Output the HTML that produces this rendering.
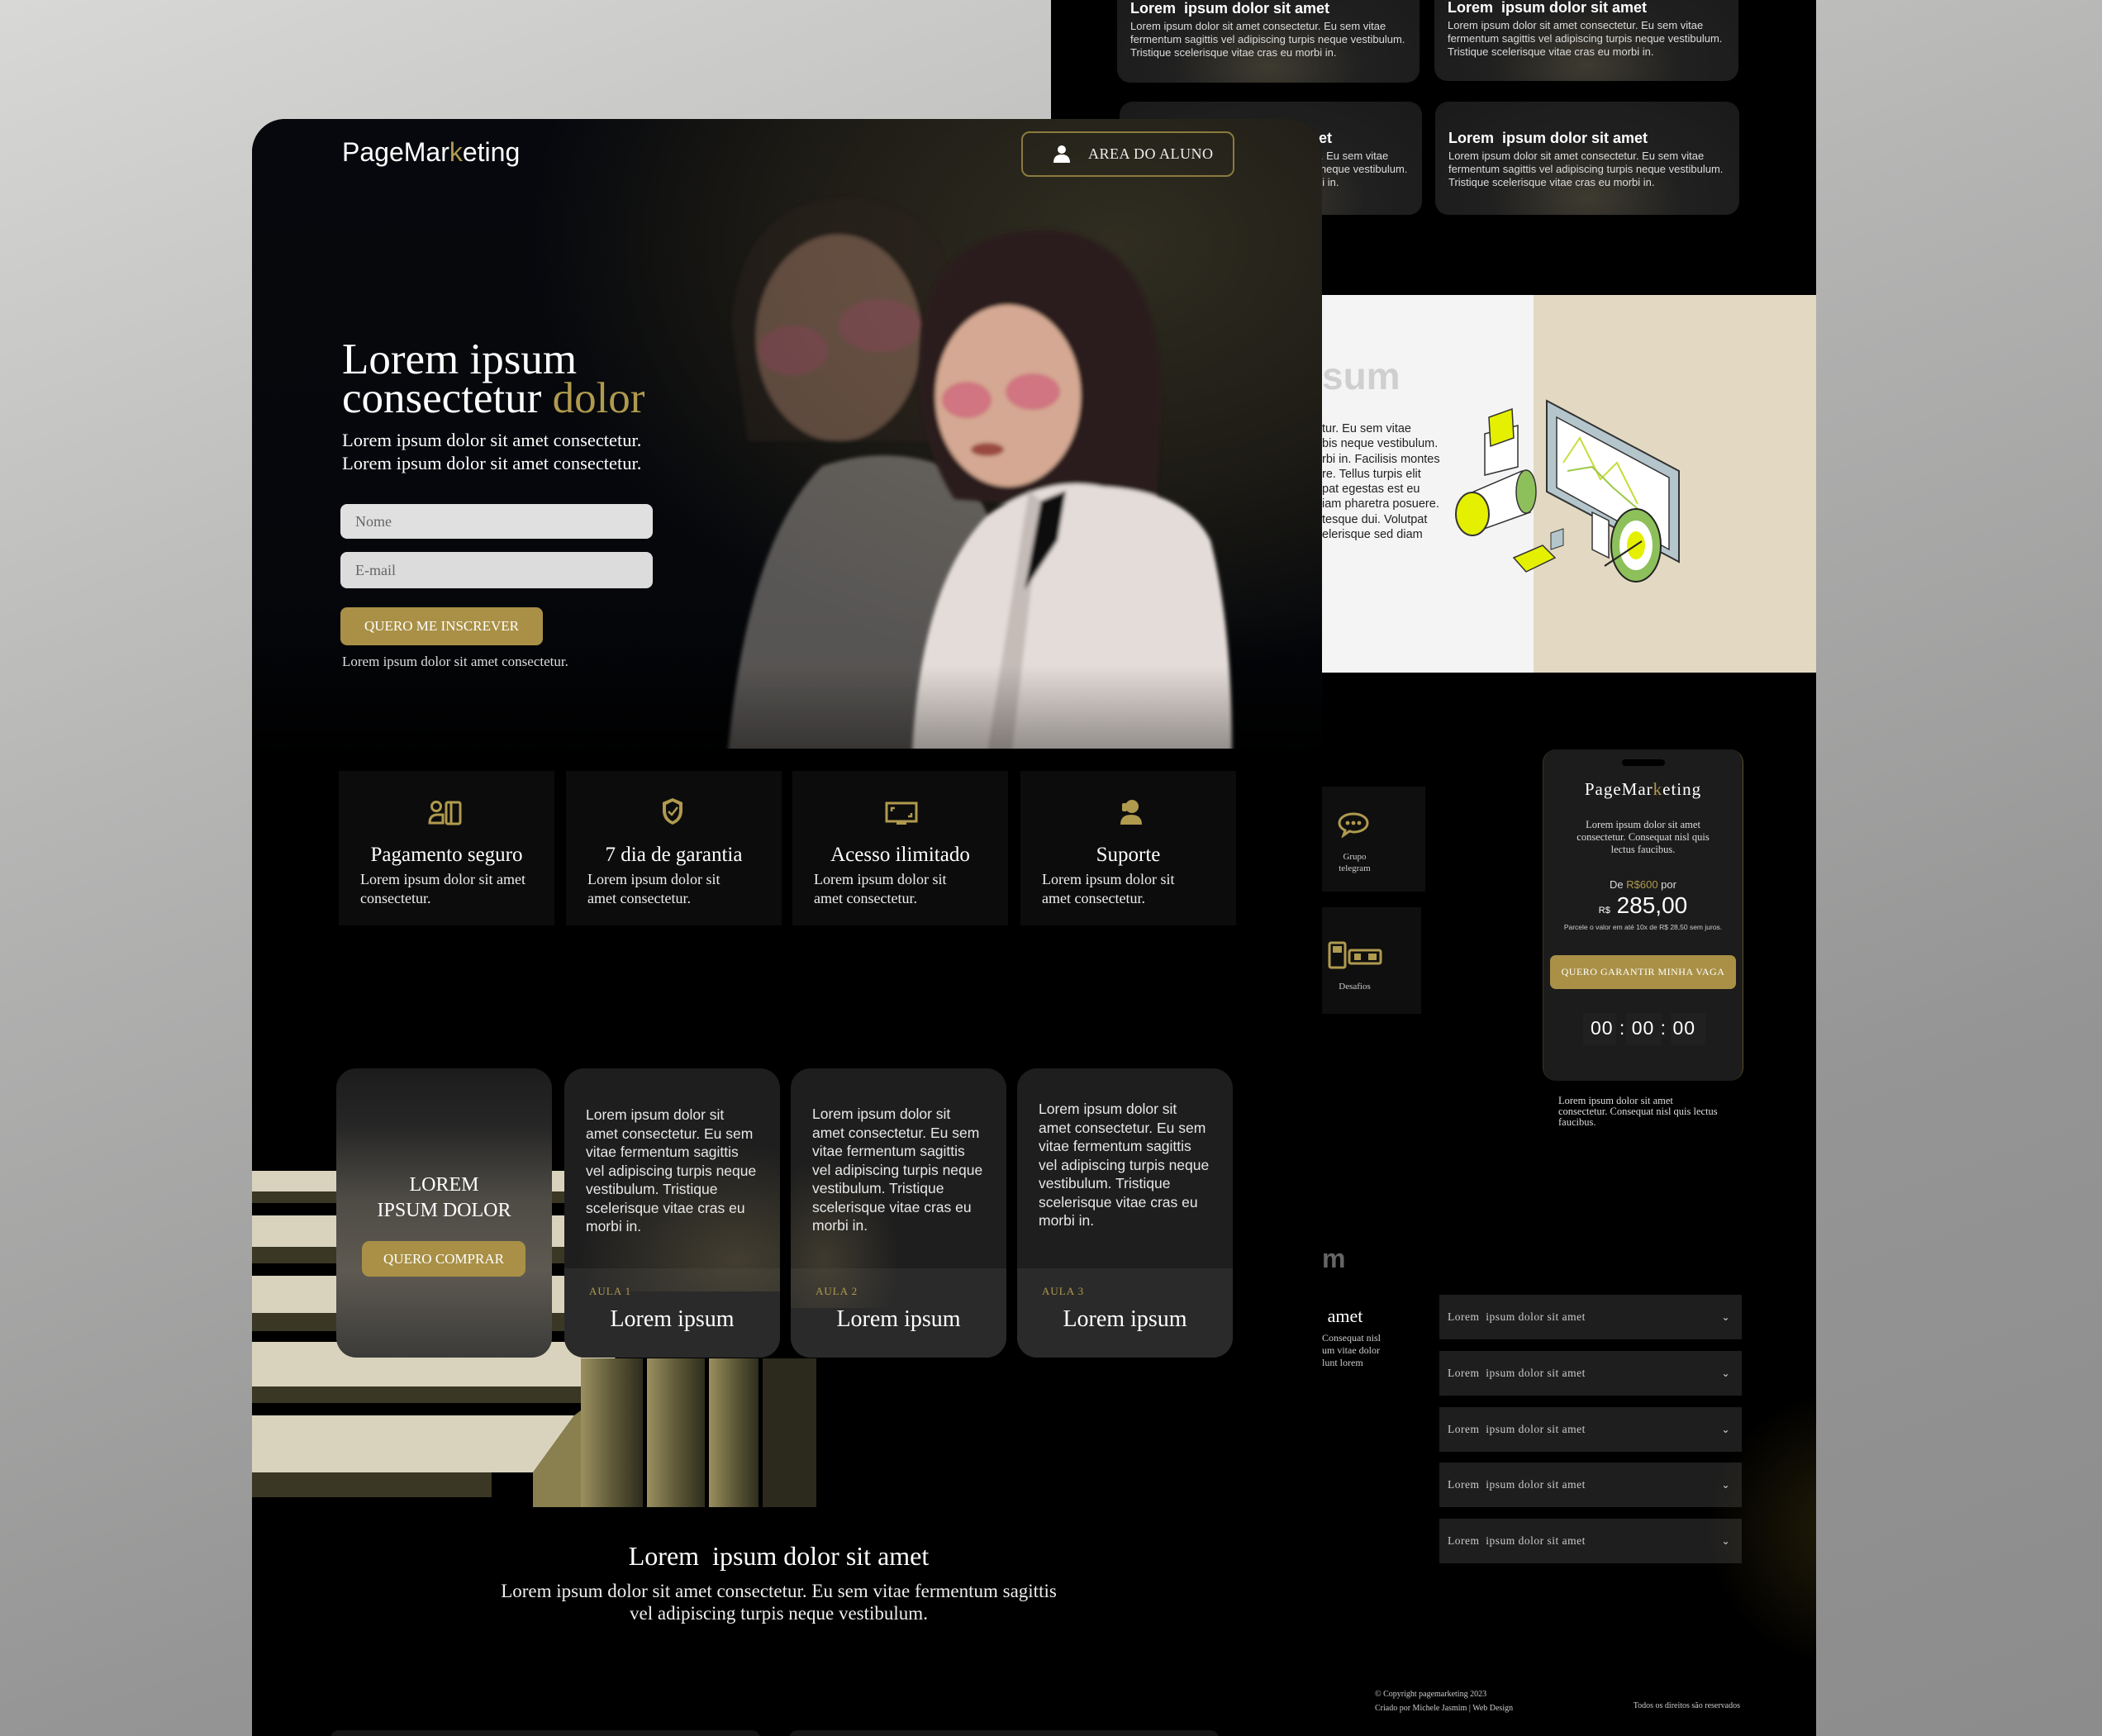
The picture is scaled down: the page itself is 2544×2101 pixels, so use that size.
<!DOCTYPE html>
<html><head><meta charset="utf-8"><style>
*{margin:0;padding:0;box-sizing:border-box}
body{width:2544px;height:2101px;overflow:hidden;position:relative;background:linear-gradient(160deg,#d8d8d6 0%,#b4b4b3 35%,#959595 70%,#8c8c8c 100%);font-family:"Liberation Serif",serif}
.a{position:absolute}
.sans{font-family:"Liberation Sans",sans-serif}
.gold{color:#b09a4e}
#back{left:1272px;top:0;width:926px;height:2101px;background:#000;overflow:hidden}
.tc{background:radial-gradient(ellipse at 50% 85%,#3e3b30 0%,#202020 45%,#1a1a1a 100%);border-radius:16px;color:#fff}
.tc h4{font-family:"Liberation Sans",sans-serif;font-size:18px;font-weight:bold;margin-bottom:3px}
.tc p{font-family:"Liberation Sans",sans-serif;font-size:13px;line-height:16px;color:#ddd}
#front{left:305px;top:144px;width:1295px;height:1957px;background:#000;border-radius:40px 40px 0 0;overflow:hidden}
.feat{background:#0c0c0c;top:789px;height:187px;width:261px;color:#fff;text-align:center}
.feat h3{font-weight:normal;font-size:25px;margin-top:88px;white-space:nowrap}
.feat p{font-size:18px;line-height:23px;text-align:left;padding-left:26px;padding-right:8px;margin-top:4px;color:#eee}
.course{top:1149px;width:261px;height:350px;border-radius:24px;background:#1e1e1e;overflow:hidden;color:#fff}
.course .bt{position:absolute;left:0;right:0;top:242px;bottom:0;background:#2a2a2a}
.course p{font-family:"Liberation Sans",sans-serif;font-size:17.5px;line-height:22.5px;position:absolute;left:26px;right:26px;color:#e8e8e8}
.course .au{position:absolute;left:30px;top:262px;font-size:13px;color:#b09a4e;letter-spacing:1px}
.course .lt{position:absolute;left:0;right:0;top:288px;text-align:center;font-size:28px}
.faq{left:470px;width:366px;height:54px;background:#1e1e1e;color:#ccc;font-size:13.5px;line-height:54px;padding-left:10px;letter-spacing:.5px}
.faq span{position:absolute;right:14px;top:0;font-size:12px;color:#ddd}
</style></head><body>

<div id="back" class="a">
  <div class="a tc" style="left:80px;top:-30px;width:366px;height:130px;padding:30px 16px"><h4>Lorem&nbsp; ipsum dolor sit amet</h4><p>Lorem ipsum dolor sit amet consectetur. Eu sem vitae fermentum sagittis vel adipiscing turpis neque vestibulum. Tristique scelerisque vitae cras eu morbi in.</p></div>
  <div class="a tc" style="left:464px;top:-30px;width:368px;height:128px;padding:29px 16px"><h4>Lorem&nbsp; ipsum dolor sit amet</h4><p>Lorem ipsum dolor sit amet consectetur. Eu sem vitae fermentum sagittis vel adipiscing turpis neque vestibulum. Tristique scelerisque vitae cras eu morbi in.</p></div>
  <div class="a tc" style="left:83px;top:123px;width:366px;height:137px;padding:34px 16px"><h4>Lorem&nbsp; ipsum dolor sit amet</h4><p>Lorem ipsum dolor sit amet consectetur. Eu sem vitae fermentum sagittis vel adipiscing turpis neque vestibulum. Tristique scelerisque vitae cras eu morbi in.</p></div>
  <div class="a tc" style="left:465px;top:123px;width:368px;height:137px;padding:34px 16px"><h4>Lorem&nbsp; ipsum dolor sit amet</h4><p>Lorem ipsum dolor sit amet consectetur. Eu sem vitae fermentum sagittis vel adipiscing turpis neque vestibulum. Tristique scelerisque vitae cras eu morbi in.</p></div>

  <div class="a" style="left:0;top:357px;width:926px;height:457px;background:#f4f4f4"></div>
  <div class="a" style="left:584px;top:357px;width:342px;height:457px;background:#e3d9c3"></div>
  <div class="a sans" style="left:328px;top:428px;font-size:46px;font-weight:bold;color:#cfcfcf">sum</div>
  <div class="a sans" style="left:328px;top:510px;font-size:14.5px;line-height:18.3px;color:#222;white-space:pre">tur. Eu sem vitae
bis neque vestibulum.
rbi in. Facilisis montes
re. Tellus turpis elit
pat egestas est eu
iam pharetra posuere.
tesque dui. Volutpat
elerisque sed diam</div>
  <svg class="a" style="left:480px;top:470px" width="330" height="270" viewBox="0 0 330 270">
    <polygon points="120,15 280,100 280,210 120,125" fill="#b4c6cc" stroke="#333" stroke-width="2"/>
    <polygon points="132,35 268,108 268,195 132,120" fill="#fff" stroke="#333" stroke-width="1.5"/>
    <polyline points="140,90 160,60 185,110 205,90 230,140" fill="none" stroke="#c8dd3a" stroke-width="2"/>
    <polyline points="145,100 175,95 200,120 235,150" fill="none" stroke="#9ec84a" stroke-width="2"/>
    <polygon points="175,150 195,160 195,205 175,195" fill="#fff" stroke="#333" stroke-width="1.5"/>
    <ellipse cx="228" cy="190" rx="30" ry="44" fill="#8dc05a" stroke="#222" stroke-width="2"/>
    <ellipse cx="228" cy="190" rx="20" ry="30" fill="#fff"/>
    <ellipse cx="228" cy="190" rx="11" ry="17" fill="#e4f000"/>
    <line x1="190" y1="215" x2="235" y2="185" stroke="#222" stroke-width="2"/>
    <polygon points="20,130 90,100 100,150 30,175" fill="#fff" stroke="#333" stroke-width="1.5"/>
    <ellipse cx="30" cy="152" rx="20" ry="26" fill="#e4f000" stroke="#333" stroke-width="2"/>
    <ellipse cx="95" cy="125" rx="12" ry="26" fill="#8dc05a" stroke="#333" stroke-width="1.5"/>
    <polygon points="45,55 85,45 85,95 45,105" fill="#fff" stroke="#333" stroke-width="1.5"/>
    <polygon points="50,35 78,25 80,60 52,70" fill="#e4f000" stroke="#333" stroke-width="1.5"/>
    <polygon points="80,205 115,190 130,205 95,222" fill="#e4f000" stroke="#333" stroke-width="1.5"/>
    <polygon points="125,175 140,170 140,190 125,195" fill="#b4c6cc" stroke="#333"/>
  </svg>

  <div class="a" style="left:328px;top:952px;width:125px;height:127px;background:#0f0f0f"></div>
  <svg class="a" style="left:346px;top:982px" width="40" height="32" viewBox="0 0 40 32"><path d="M20 3C10 3 3 8 3 14c0 4 3 7 7 9l-2 6 7-5c2 0 3 1 5 1 10 0 17-5 17-11S30 3 20 3z" fill="none" stroke="#b09a4e" stroke-width="3"/><circle cx="13" cy="14" r="2.4" fill="#b09a4e"/><circle cx="20" cy="14" r="2.4" fill="#b09a4e"/><circle cx="27" cy="14" r="2.4" fill="#b09a4e"/></svg>
  <div class="a" style="left:305px;top:1030px;width:125px;text-align:center;font-size:11px;line-height:14px;color:#ccc">Grupo<br>telegram</div>
  <div class="a" style="left:328px;top:1098px;width:120px;height:129px;background:#0f0f0f"></div>
  <svg class="a" style="left:334px;top:1138px" width="70" height="36" viewBox="0 0 70 36"><rect x="3" y="3" width="19" height="30" rx="2" fill="none" stroke="#b09a4e" stroke-width="3"/><rect x="7" y="7" width="11" height="8" fill="#b09a4e"/><rect x="27" y="12" width="38" height="16" rx="2" fill="none" stroke="#b09a4e" stroke-width="3"/><rect x="33" y="16" width="8" height="8" fill="#b09a4e"/><rect x="50" y="16" width="10" height="8" fill="#b09a4e"/></svg>
  <div class="a" style="left:305px;top:1188px;width:125px;text-align:center;font-size:11px;color:#ccc">Desafios</div>

  <div class="a" style="left:595px;top:907px;width:243px;height:401px;background:#1c1c1c;border-radius:16px;border-right:1.5px solid #5a4e28;border-left:1.5px solid #3a3420">
    <div class="a" style="left:95px;top:12px;width:52px;height:8px;border-radius:4px;background:#000"></div>
    <div class="a" style="left:0;right:0;top:36px;text-align:center;font-size:21px;color:#fff;letter-spacing:1px">PageMar<span class="gold">k</span>eting</div>
    <div class="a" style="left:30px;right:30px;top:84px;text-align:center;font-size:12.5px;line-height:15px;color:#ddd">Lorem ipsum dolor sit amet consectetur. Consequat nisl quis lectus faucibus.</div>
    <div class="a sans" style="left:0;right:0;top:156px;text-align:center;font-size:13px;color:#ddd">De <span class="gold">R$600</span> por</div>
    <div class="a sans" style="left:0;right:0;top:173px;text-align:center;font-size:28px;color:#fff"><span style="font-size:11px">R$</span> 285,00</div>
    <div class="a sans" style="left:0;right:0;top:210px;text-align:center;font-size:8.5px;color:#ccc">Parcele o valor em até 10x de R$ 28,50 sem juros.</div>
    <div class="a" style="left:8px;right:8px;top:249px;height:41px;border-radius:7px;background:#a99046;color:#fff;text-align:center;line-height:41px;font-size:12px;letter-spacing:.5px">QUERO GARANTIR MINHA VAGA</div>
    <div class="a" style="left:48px;top:319px;width:40px;height:39px;background:#202020"></div>
    <div class="a" style="left:100px;top:319px;width:43px;height:39px;background:#202020"></div>
    <div class="a" style="left:154px;top:319px;width:42px;height:39px;background:#202020"></div>
    <div class="a sans" style="left:0;right:0;top:324px;text-align:center;font-size:23px;color:#fff;letter-spacing:1px">00 : 00 : 00</div>
  </div>
  <div class="a" style="left:614px;top:1326px;width:200px;font-size:12.5px;line-height:13px;color:#ddd">Lorem ipsum dolor sit amet consectetur. Consequat nisl quis lectus faucibus.</div>

  <div class="a sans" style="left:328px;top:1505px;font-size:32px;font-weight:bold;color:#666">m</div>
  <div class="a" style="left:323px;top:1580px;font-size:22px;color:#fff">: amet</div>
  <div class="a" style="left:328px;top:1612px;font-size:12px;line-height:15px;color:#ccc">Consequat nisl<br>um vitae dolor<br>lunt lorem</div>
  <div class="a faq" style="top:1567px">Lorem&nbsp; ipsum dolor sit amet<span>⌄</span></div>
  <div class="a faq" style="top:1635px">Lorem&nbsp; ipsum dolor sit amet<span>⌄</span></div>
  <div class="a faq" style="top:1703px">Lorem&nbsp; ipsum dolor sit amet<span>⌄</span></div>
  <div class="a faq" style="top:1770px">Lorem&nbsp; ipsum dolor sit amet<span>⌄</span></div>
  <div class="a faq" style="top:1838px">Lorem&nbsp; ipsum dolor sit amet<span>⌄</span></div>
  <div class="a" style="left:392px;top:2042px;font-size:10px;line-height:17px;color:#ccc">© Copyright pagemarketing 2023<br>Criado por Michele Jasmim | Web Design</div>
  <div class="a" style="left:662px;top:2059px;width:172px;text-align:right;font-size:10px;color:#ccc">Todos os direitos são reservados</div>
  <div class="a" style="left:760px;top:1650px;width:300px;height:400px;background:radial-gradient(ellipse at 70% 50%,rgba(120,100,30,.3),transparent 60%)"></div>
</div>

<div id="front" class="a">
  <div class="a" style="left:0;top:0;width:1295px;height:780px;background:radial-gradient(ellipse 900px 650px at 1050px 150px,#302d21 0%,#1d1b15 45%,rgba(5,7,12,0) 80%),linear-gradient(180deg,#06080d 0%,#05070b 75%,#000 100%)"></div>
  <svg class="a" style="left:560px;top:90px" width="720" height="672" viewBox="0 0 720 672">
    <defs><filter id="b"><feGaussianBlur stdDeviation="2.5"/></filter>
    <linearGradient id="fd" x1="0" y1="0" x2="0" y2="1"><stop offset="0.85" stop-color="#000" stop-opacity="0"/><stop offset="1" stop-color="#000" stop-opacity=".35"/></linearGradient></defs>
    <g opacity=".5" filter="url(#b)">
      <path d="M20 160 Q30 10 160 5 Q290 10 290 160 L280 300 L40 300 Z" fill="#2c211d"/>
      <ellipse cx="150" cy="175" rx="100" ry="125" fill="#a57e6a"/>
      <ellipse cx="95" cy="190" rx="42" ry="30" fill="#c87580"/>
      <ellipse cx="200" cy="160" rx="50" ry="32" fill="#c87580"/>
      <path d="M16 676 Q40 420 130 330 Q220 300 300 340 Q370 420 374 676 Z" fill="#aaa49e"/>
    </g>
    <g filter="url(#b)">
      <path d="M248 200 Q250 44 400 44 Q540 50 540 250 L535 370 L420 380 L290 370 Q245 300 248 200 Z" fill="#2a1c1c"/>
      <ellipse cx="355" cy="245" rx="88" ry="110" fill="#d4a892"/>
      <ellipse cx="305" cy="250" rx="30" ry="22" fill="#cf6f80" opacity=".9"/>
      <ellipse cx="385" cy="240" rx="33" ry="22" fill="#cf6f80" opacity=".9"/>
      <ellipse cx="330" cy="310" rx="20" ry="8" fill="#9a4a40"/>
      <path d="M239 676 Q250 470 330 390 Q400 340 470 355 Q570 360 600 420 Q626 520 626 676 Z" fill="#e4dcd8"/>
      <path d="M380 360 L395 372 L360 676 L330 676 Z" fill="#c5bcb7"/>
      <path d="M395 372 L425 360 L415 420 L375 480 Z" fill="#111"/>
    </g>
    <rect width="720" height="672" fill="url(#fd)"/>
  </svg>

  <div class="a sans" style="left:109px;top:22px;font-size:32px;color:#fff">PageMar<span class="gold">k</span>eting</div>
  <div class="a" style="left:931px;top:15px;width:258px;height:55px;border:2px solid #8c7a3e;border-radius:10px;color:#eee;font-size:18px;line-height:51px;padding-left:79px;letter-spacing:.5px">AREA DO ALUNO</div>
  <svg class="a" style="left:968px;top:30px" width="24" height="24" viewBox="0 0 24 24"><circle cx="12" cy="7" r="5" fill="#fff"/><path d="M2 23 Q2 13 12 13 Q22 13 22 23Z" fill="#fff"/></svg>

  <div class="a" style="left:109px;top:268px;font-size:53px;line-height:47px;color:#fff">Lorem ipsum<br>consectetur <span class="gold">dolor</span></div>
  <div class="a" style="left:109px;top:375px;font-size:22.5px;line-height:28px;color:#fff">Lorem ipsum dolor sit amet consectetur.<br>Lorem ipsum dolor sit amet consectetur.</div>
  <div class="a" style="left:107px;top:466px;width:378px;height:42px;border-radius:8px;background:#e0e0e0;font-size:18px;line-height:42px;padding-left:18px;color:#666">Nome</div>
  <div class="a" style="left:107px;top:524px;width:378px;height:44px;border-radius:8px;background:#dcdcdc;font-size:18px;line-height:44px;padding-left:18px;color:#666">E-mail</div>
  <div class="a" style="left:107px;top:591px;width:245px;height:46px;border-radius:8px;background:#a99046;color:#fff;font-size:17px;line-height:46px;text-align:center">QUERO ME INSCREVER</div>
  <div class="a" style="left:109px;top:647px;font-size:17px;color:#ddd">Lorem ipsum dolor sit amet consectetur.</div>

  <div class="a feat" style="left:105px"><h3>Pagamento seguro</h3><p>Lorem ipsum dolor sit amet consectetur.</p></div>
  <div class="a feat" style="left:380px"><h3>7 dia de garantia</h3><p style="padding-right:40px">Lorem ipsum dolor sit amet consectetur.</p></div>
  <div class="a feat" style="left:654px"><h3>Acesso ilimitado</h3><p style="padding-right:40px">Lorem ipsum dolor sit amet consectetur.</p></div>
  <div class="a feat" style="left:930px"><h3>Suporte</h3><p style="padding-right:40px">Lorem ipsum dolor sit amet consectetur.</p></div>
  <svg class="a" style="left:213px;top:824px" width="42" height="32" viewBox="0 0 42 32"><circle cx="10" cy="8" r="5.5" fill="none" stroke="#b09a4e" stroke-width="3"/><path d="M2 28 Q2 18 12 18 L18 18 L18 28Z" fill="none" stroke="#b09a4e" stroke-width="3"/><rect x="22" y="3" width="17" height="26" rx="2" fill="none" stroke="#b09a4e" stroke-width="3"/><line x1="28" y1="3" x2="28" y2="29" stroke="#b09a4e" stroke-width="3"/></svg>
  <svg class="a" style="left:494px;top:820px" width="30" height="36" viewBox="0 0 30 36"><path d="M15 2 L27 7 L27 17 Q27 29 15 34 Q3 29 3 17 L3 7Z" fill="#b09a4e"/><path d="M15 6 L23 10 L23 17 Q23 26 15 30 Q7 26 7 17 L7 10Z" fill="#0c0c0c"/><path d="M10 18 L14 22 L21 13" fill="none" stroke="#b09a4e" stroke-width="2.5"/></svg>
  <svg class="a" style="left:766px;top:826px" width="40" height="30" viewBox="0 0 40 30"><rect x="2" y="2" width="36" height="22" fill="none" stroke="#b09a4e" stroke-width="3"/><path d="M8 12 V8 H12 M32 14 V18 H28" fill="none" stroke="#b09a4e" stroke-width="2.5"/><rect x="14" y="25" width="12" height="3" fill="#b09a4e"/></svg>
  <svg class="a" style="left:1048px;top:822px" width="32" height="36" viewBox="0 0 32 36"><circle cx="17" cy="10" r="8" fill="#b09a4e"/><rect x="5" y="6" width="6" height="10" rx="2" fill="#b09a4e"/><path d="M3 32 Q3 20 16 20 Q29 20 29 32 Z" fill="#b09a4e"/></svg>

  <svg class="a" style="left:0;top:1260px" width="700" height="420" viewBox="0 0 700 420">
    <defs><linearGradient id="ol" x1="0" y1="0" x2="1" y2="0"><stop offset="0" stop-color="#9c9060"/><stop offset=".5" stop-color="#5f5a38"/><stop offset="1" stop-color="#2e2d1e"/></linearGradient></defs>
    <rect x="0" y="13" width="440" height="25" fill="#d9d3be"/><rect x="0" y="38" width="440" height="14" fill="#3a3724"/>
    <rect x="0" y="67" width="440" height="38" fill="#d9d3be"/><rect x="0" y="105" width="440" height="20" fill="#3a3724"/>
    <rect x="0" y="140" width="440" height="45" fill="#d9d3be"/><rect x="0" y="185" width="440" height="22" fill="#3a3724"/>
    <polygon points="0,220 456,220 410,274 0,274" fill="#d9d3be"/><rect x="0" y="274" width="410" height="20" fill="#3a3724"/>
    <polygon points="0,309 390,309 340,378 0,378" fill="#d9d3be"/><rect x="0" y="378" width="290" height="30" fill="#3a3724"/>
    <polygon points="390,309 410,294 410,420 340,420 340,378" fill="#8a7f4e"/>
    <rect x="398" y="240" width="75" height="180" fill="url(#ol)"/>
    <rect x="478" y="240" width="70" height="180" fill="url(#ol)"/>
    <rect x="553" y="240" width="60" height="180" fill="url(#ol)"/>
    <rect x="618" y="240" width="65" height="180" fill="#2b2a1d"/>
  </svg>

  <div class="a course" style="left:102px;background:linear-gradient(180deg,#1c1c1c 0%,#262626 20%,#4e4b45 45%,#5e5a52 70%,#3c3b39 100%)">
    <div class="a" style="left:0;right:0;top:126px;text-align:center;font-size:24px;line-height:31px">LOREM<br>IPSUM DOLOR</div>
    <div class="a" style="left:31px;top:209px;width:198px;height:43px;border-radius:9px;background:#a99046;text-align:center;line-height:43px;font-size:17px">QUERO COMPRAR</div>
  </div>
  <div class="a course" style="left:378px"><div class="bt"></div><div class="a" style="left:0;top:80px;width:261px;height:190px;background:radial-gradient(ellipse at 80% 80%,rgba(110,100,70,.45),transparent 65%)"></div><p style="top:45px">Lorem ipsum dolor sit amet consectetur. Eu sem vitae fermentum sagittis vel adipiscing turpis neque vestibulum. Tristique scelerisque vitae cras eu morbi in.</p><div class="au">AULA 1</div><div class="lt">Lorem ipsum</div></div>
  <div class="a course" style="left:652px"><div class="bt"></div><div class="a" style="left:-60px;top:100px;width:200px;height:190px;background:radial-gradient(ellipse at 50% 70%,rgba(110,100,70,.4),transparent 65%)"></div><p style="top:44px">Lorem ipsum dolor sit amet consectetur. Eu sem vitae fermentum sagittis vel adipiscing turpis neque vestibulum. Tristique scelerisque vitae cras eu morbi in.</p><div class="au">AULA 2</div><div class="lt">Lorem ipsum</div></div>
  <div class="a course" style="left:926px"><div class="bt"></div><p style="top:38px">Lorem ipsum dolor sit amet consectetur. Eu sem vitae fermentum sagittis vel adipiscing turpis neque vestibulum. Tristique scelerisque vitae cras eu morbi in.</p><div class="au">AULA 3</div><div class="lt">Lorem ipsum</div></div>

  <div class="a" style="left:-20px;right:0;top:1721px;text-align:center;font-size:32px;color:#fff">Lorem&nbsp; ipsum dolor sit amet</div>
  <div class="a" style="left:-20px;right:0;top:1768px;text-align:center;font-size:23px;line-height:27px;color:#eee">Lorem ipsum dolor sit amet consectetur. Eu sem vitae fermentum sagittis<br>vel adipiscing turpis neque vestibulum.</div>
  <div class="a" style="left:95px;top:1950px;width:520px;height:20px;border-radius:10px;background:#151515"></div>
  <div class="a" style="left:650px;top:1950px;width:520px;height:20px;border-radius:10px;background:#151515"></div>
</div>
</body></html>
